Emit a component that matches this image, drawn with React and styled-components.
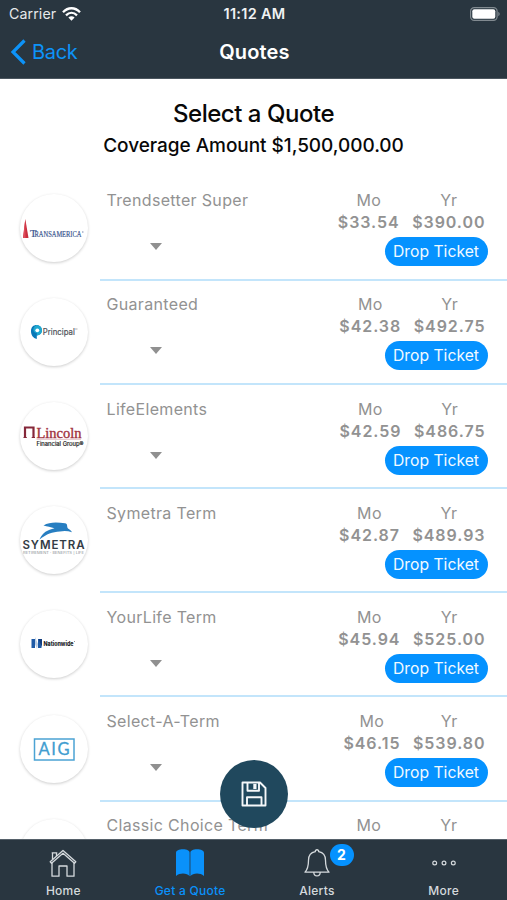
import React from "react";
import styled, { createGlobalStyle } from "styled-components";

const Global = createGlobalStyle`
  * { box-sizing: border-box; }
  body { margin: 0; background: #fff; font-family: Inter, "Liberation Sans", sans-serif; }
`;

const Screen = styled.div`
  width: 507px;
  height: 900px;
  display: flex;
  flex-direction: column;
  overflow: hidden;
  background: #fff;
  position: relative;
  white-space: nowrap;
`;

const Header = styled.header`
  height: 79px;
  flex: none;
  background: #293640;
  color: #fff;
  border-bottom: 1px solid #4b565f;
`;

const Bar = styled.div`
  display: grid;
  grid-template-columns: 1fr auto 1fr;
  align-items: center;
  height: ${(p) => p.$height}px;
  padding: 0 7px 0 9px;
`;

const Side = styled.div`
  display: flex;
  align-items: center;
  gap: 6px;
  justify-self: ${(p) => (p.$end ? "end" : "start")};
`;

const Carrier = styled.span`
  font-size: 14.2px;
  color: #e6e9eb;
  letter-spacing: 0.1px;
`;

const Clock = styled.span`
  font-size: 14.5px;
  font-weight: 600;
  color: #f0f2f3;
  letter-spacing: 0.3px;
`;

const BackButton = styled.button`
  border: 0;
  padding: 0;
  background: none;
  display: flex;
  align-items: center;
  gap: 6px;
  margin-left: 1px;
  color: #0d93f8;
  font: 400 20px Inter, sans-serif;
  letter-spacing: -0.3px;
`;

const NavTitle = styled.h1`
  margin: 0;
  font-size: 20px;
  font-weight: 600;
  letter-spacing: 0.15px;
`;

const Heading = styled.div`
  height: 97.4px;
  flex: none;
  text-align: center;
  padding-top: 19px;
  color: #080808;
`;

const Title = styled.h2`
  margin: 0;
  font-size: 24px;
  line-height: 31px;
  font-weight: 500;
  letter-spacing: -0.47px;
`;

const Coverage = styled.p`
  margin: 0;
  font-size: 19px;
  line-height: 34px;
  font-weight: 500;
  letter-spacing: -0.04px;
`;

const List = styled.main`
  flex: 1;
  min-height: 0;
  overflow: hidden;
`;

const Row = styled.article`
  height: 104.2px;
  display: flex;
`;

const LogoCell = styled.div`
  width: 100px;
  padding: 17.2px 0 0 20px;
`;

const LogoDisc = styled.div`
  width: 68px;
  height: 68px;
  border-radius: 50%;
  background: #fff;
  box-shadow: 0 1px 3px rgba(0, 0, 0, 0.2);

  svg { display: block; }
`;

const Body = styled.div`
  flex: 1;
  display: flex;
  justify-content: space-between;
  border-bottom: 2px solid #c3e5fb;
  padding: 12.8px 19.5px 0 6.5px;
  color: #929292;
`;

const Product = styled.div`
  display: flex;
  flex-direction: column;
  gap: 32px;
`;

const Label = styled.span`
  font-size: 16px;
  line-height: 22px;
  letter-spacing: 0.33px;
`;

const Caret = styled.i`
  width: 0;
  height: 0;
  margin-left: 43px;
  border: 6.5px solid transparent;
  border-top: 7px solid #909090;
  border-bottom: 0;
`;

const Pricing = styled.div`
  display: flex;
  flex-direction: column;
  align-items: flex-end;
`;

const Prices = styled.div`
  display: flex;
  gap: 12.5px;
  padding-right: 2px;
`;

const Price = styled.div`
  display: flex;
  flex-direction: column;
  align-items: center;
`;

const Amount = styled.strong`
  font-size: 16px;
  line-height: 22px;
  font-weight: 600;
  letter-spacing: 0.95px;
`;

const Ticket = styled.button`
  width: 103px;
  height: 29px;
  margin-top: 4px;
  border: 0;
  padding: 0;
  border-radius: 15px;
  background: #0592ff;
  color: #f2faff;
  font: 400 15.7px Inter, sans-serif;
  letter-spacing: 0.02px;
`;

const SaveButton = styled.button`
  position: absolute;
  left: 220px;
  top: 760px;
  width: 68px;
  height: 68px;
  padding: 0;
  border: 0;
  border-radius: 50%;
  background: #20485d;
  display: grid;
  place-items: center;
`;

const Tabs = styled.nav`
  height: 61px;
  flex: none;
  display: grid;
  grid-template-columns: repeat(4, 1fr);
  background: #293640;
  border-top: 1px solid #56616a;
`;

const Tab = styled.div`
  position: relative;
  display: flex;
  flex-direction: column;
  align-items: center;
  padding-top: 9px;
  color: ${(p) => (p.$active ? "#0a91fa" : "#d5dadd")};
  font-size: 12px;
  font-weight: 500;
  line-height: 16px;
  letter-spacing: 0.27px;

  svg { display: block; margin-bottom: 6px; }
`;

const Badge = styled.span`
  position: absolute;
  left: 76px;
  top: 4px;
  width: 24px;
  height: 22px;
  border-radius: 11px;
  background: #0592ff;
  color: #fff;
  font-size: 14px;
  font-weight: 700;
  line-height: 22px;
  text-align: center;
`;

const LogoText = styled.text`
  font-family: ${(p) => p.$family || "Inter"}, sans-serif;
  font-weight: ${(p) => p.$weight || 400};
  font-size: ${(p) => p.$size}px;
`;

const LogoSvg = ({ children }) => (
  <svg width="68" height="68" viewBox="0 0 68 68">{children}</svg>
);

const Transamerica = () => (
  <LogoSvg>
    <path d="M5.300 25L8.500 44H3z" fill="#c92f3e" />
    <path d="M5.300 25L5.500 44H3z" fill="#df4c5a" />
    <LogoText $family="Liberation Serif" $size={10} x="10" y="43" fill="#3b568f" stroke="#3b568f" strokeWidth=".2" textLength="6.500" lengthAdjust="spacingAndGlyphs">T</LogoText>
    <LogoText $family="Liberation Serif" $size={8.4} x="14.500" y="43" fill="#3b568f" stroke="#3b568f" strokeWidth=".2" textLength="47" lengthAdjust="spacingAndGlyphs">RANSAMERICA</LogoText>
    <circle cx="62.800" cy="38" r=".8" fill="#8492b6" />
  </LogoSvg>
);

const Principal = () => (
  <LogoSvg>
    <path d="M11 33c0-4 2.500-6 5.500-6s5.500 2.300 5.500 5.300-2.300 5.200-5.200 5.200V41C13 40 11 37 11 33z" fill="#0878b8" />
    <path d="M16.500 27c3 0 5.500 2.300 5.500 5.300s-2.300 5.200-5.200 5.200V35c-2-.1-3.500-1.500-3.500-3.500s1.300-3.500 3.200-4.500z" fill="#20a8d0" />
    <circle cx="17.300" cy="32.300" r="1.900" fill="#fff" />
    <LogoText $size={8.3} x="22.800" y="36.800" fill="#505459" stroke="#505459" strokeWidth=".2" textLength="32" lengthAdjust="spacingAndGlyphs">Principal</LogoText>
    <path d="M55 31h2.500" stroke="#999" strokeWidth=".8" />
  </LogoSvg>
);

const Lincoln = () => (
  <LogoSvg>
    <path d="M5 35.500V25.500h8.500v10" fill="none" stroke="#85283a" strokeWidth="2.200" />
    <path d="M3.500 35.500h3.300M11.700 35.500H15" stroke="#85283a" />
    <LogoText $family="Liberation Serif" $size={15.5} x="16.500" y="35.500" fill="#a13240" stroke="#a13240" strokeWidth=".4" textLength="45" lengthAdjust="spacingAndGlyphs">Lincoln</LogoText>
    <path d="M16.500 37.300H61" stroke="#dcaeb4" strokeWidth=".8" />
    <LogoText $size={6.2} x="16.5" y="44.200" fill="#222" stroke="#222" strokeWidth=".2" textLength="47" lengthAdjust="spacingAndGlyphs">Financial Group®</LogoText>
  </LogoSvg>
);

const Symetra = () => (
  <LogoSvg>
    <path d="M23.500 19.500c6-3.800 14-3.200 21.500-2.200 3 .5 1.500 3.300 3 5.200 1.500 1.200 3 1.600 4 3.700-4-1.200-8-1.600-12-.6-8 .4-13 2.400-20.500 7.900 3-7.100 8-9.500 15-11.200-4-1.200-7-1.800-11-2.800z" fill="#277ec1" />
    <LogoText $weight={600} $size={11.500} x="2.500" y="42.500" fill="#333c46" textLength="62" lengthAdjust="spacing">SYMETRA</LogoText>
    <LogoText $size={3.300} x="3" y="48" fill="#8a8f94" textLength="61" lengthAdjust="spacingAndGlyphs">RETIREMENT · BENEFITS | LIFE</LogoText>
  </LogoSvg>
);

const Nationwide = () => (
  <LogoSvg>
    <path d="M11.500 29h3.500v9h-3.500zM18 29h3.500v9H18z" fill="#1e5aa6" />
    <path d="M15 27l3 7-1 5-2-5z" fill="#b9cce3" />
    <path d="M18.500 29H22v8z" fill="#123c7c" />
    <LogoText $weight={800} $size={6} x="23.500" y="36.200" fill="#202226" textLength="30" lengthAdjust="spacingAndGlyphs">Nationwide</LogoText>
    <path d="M54 31.500h1" stroke="#777" strokeWidth=".8" />
  </LogoSvg>
);

const Aig = () => (
  <LogoSvg>
    <rect x="14.500" y="24" width="39.500" height="21" fill="none" stroke="#4ba3d4" strokeWidth="1.500" />
    <LogoText $family="Lato" $size={16.500} x="18.500" y="40.400" fill="#419dd0" stroke="#419dd0" strokeWidth=".3" textLength="31" lengthAdjust="spacing">AIG</LogoText>
  </LogoSvg>
);

const quotes = [
  { name: "Trendsetter Super", mo: "$33.54", yr: "$390.00", Logo: Transamerica, caret: true },
  { name: "Guaranteed", mo: "$42.38", yr: "$492.75", Logo: Principal, caret: true },
  { name: "LifeElements", mo: "$42.59", yr: "$486.75", Logo: Lincoln, caret: true },
  { name: "Symetra Term", mo: "$42.87", yr: "$489.93", Logo: Symetra, caret: false },
  { name: "YourLife Term", mo: "$45.94", yr: "$525.00", Logo: Nationwide, caret: true },
  { name: "Select-A-Term", mo: "$46.15", yr: "$539.80", Logo: Aig, caret: true },
  { name: "Classic Choice Term", mo: "$46.59", yr: "$540.60", Logo: null, caret: true },
];

const QuoteRow = ({ name, mo, yr, Logo, caret }) => (
  <Row>
    <LogoCell>
      <LogoDisc>{Logo && <Logo />}</LogoDisc>
    </LogoCell>
    <Body>
      <Product>
        <Label>{name}</Label>
        {caret && <Caret />}
      </Product>
      <Pricing>
        <Prices>
          <Price><Label>Mo</Label><Amount>{mo}</Amount></Price>
          <Price><Label>Yr</Label><Amount>{yr}</Amount></Price>
        </Prices>
        <Ticket>Drop Ticket</Ticket>
      </Pricing>
    </Body>
  </Row>
);

const WifiIcon = () => (
  <svg width="19" height="14" viewBox="0 0 19 14" fill="none" stroke="#fff" strokeWidth="2.300">
    <path d="M1 5.200C6-.1 13-.1 18 5.200M4 8.300c3.300-3.200 7.700-3.200 11 0" />
    <path d="M9.500 13.700L6.400 10.500c1.800-1.700 4.400-1.700 6.200 0z" fill="#fff" stroke="none" />
  </svg>
);

const BatteryIcon = () => (
  <svg width="30" height="14" viewBox="0 0 30 14">
    <rect x=".6" y=".6" width="26.500" height="12.800" rx="3.600" fill="none" stroke="#818a90" strokeWidth="1.200" />
    <rect x="2.300" y="2.300" width="23" height="9.400" rx="2" fill="#fff" />
    <path d="M28.300 4.800c1.800.8 1.800 3.600 0 4.400z" fill="#818a90" />
  </svg>
);

const HomeIcon = () => (
  <svg width="28" height="28" viewBox="0 0 28 28" fill="none" stroke="currentColor" strokeWidth="1.300" strokeLinejoin="round">
    <path d="M1.200 12.800L14 1.500l12.800 11.300-1.300 1.400L14 4.200 2.500 14.200z" />
    <path d="M3 13.800v13.400h7V17h8v10.200h7V13.800M3.500 10.500V3.800h4v3.300M2.700 3.800h5.600" />
  </svg>
);

const BookIcon = () => (
  <svg width="28" height="28" viewBox="0 0 28 28" fill="currentColor">
    <path d="M0 4C0 1.500 3 .3 7 .3s6.600 1.200 6.600 3.500v23.500c-2.200-3-9-4-13.600-.3zM28 4c0-2.500-3-3.700-7-3.700s-6.600 1.200-6.600 3.500v23.500c2.200-3 9-4 13.600-.3z" />
  </svg>
);

const BellIcon = () => (
  <svg width="28" height="28" viewBox="0 0 28 28" fill="none" stroke="currentColor" strokeWidth="1.300" strokeLinejoin="round">
    <path d="M12.300 2.700c-.2-2.600 3.600-2.600 3.400 0 4 .8 6.800 4 6.800 8.500 0 6.500.8 9 3.500 12H2c2.700-3 3.500-5.500 3.500-12 0-4.500 2.800-7.700 6.800-8.500zM10.800 23.500c.2 4.600 6.200 4.600 6.400 0" />
  </svg>
);

const MoreIcon = () => (
  <svg width="28" height="28" viewBox="0 0 28 28" fill="none" stroke="currentColor" strokeWidth="1.200">
    <circle cx="4.700" cy="14" r="1.900" />
    <circle cx="14" cy="14" r="1.900" />
    <circle cx="23.300" cy="14" r="1.900" />
  </svg>
);

const SaveIcon = () => (
  <svg width="26" height="26" viewBox="0 0 26 26" fill="none" stroke="#f5f8fa" strokeWidth="1.900">
    <path d="M1.500 1.500h17.500l5.500 5.500v17.500h-23zM6.500 1.800v8h11.500V1.800M6 24.300v-8h14.500v8" strokeLinejoin="round" />
    <path d="M12.300 3h3.200v5h-3.200z" fill="#f5f8fa" stroke="none" />
  </svg>
);

export default function App() {
  return (
    <>
      <Global />
      <Screen>
        <Header>
          <Bar $height={27}>
            <Side><Carrier>Carrier</Carrier><WifiIcon /></Side>
            <Clock>11:12 AM</Clock>
            <Side $end><BatteryIcon /></Side>
          </Bar>
          <Bar $height={50}>
            <Side>
              <BackButton>
                <svg width="16" height="26" viewBox="0 0 16 26" fill="none" stroke="currentColor" strokeWidth="3.200">
                  <path d="M14.500 1.500L3 13l11.500 11.500" />
                </svg>
                Back
              </BackButton>
            </Side>
            <NavTitle>Quotes</NavTitle>
          </Bar>
        </Header>
        <Heading>
          <Title>Select a Quote</Title>
          <Coverage>Coverage Amount $1,500,000.00</Coverage>
        </Heading>
        <List>
          {quotes.map((q) => <QuoteRow key={q.name} {...q} />)}
        </List>
        <Tabs>
          <Tab><HomeIcon />Home</Tab>
          <Tab $active><BookIcon />Get a Quote</Tab>
          <Tab><BellIcon />Alerts<Badge>2</Badge></Tab>
          <Tab><MoreIcon />More</Tab>
        </Tabs>
        <SaveButton aria-label="Save"><SaveIcon /></SaveButton>
      </Screen>
    </>
  );
}
